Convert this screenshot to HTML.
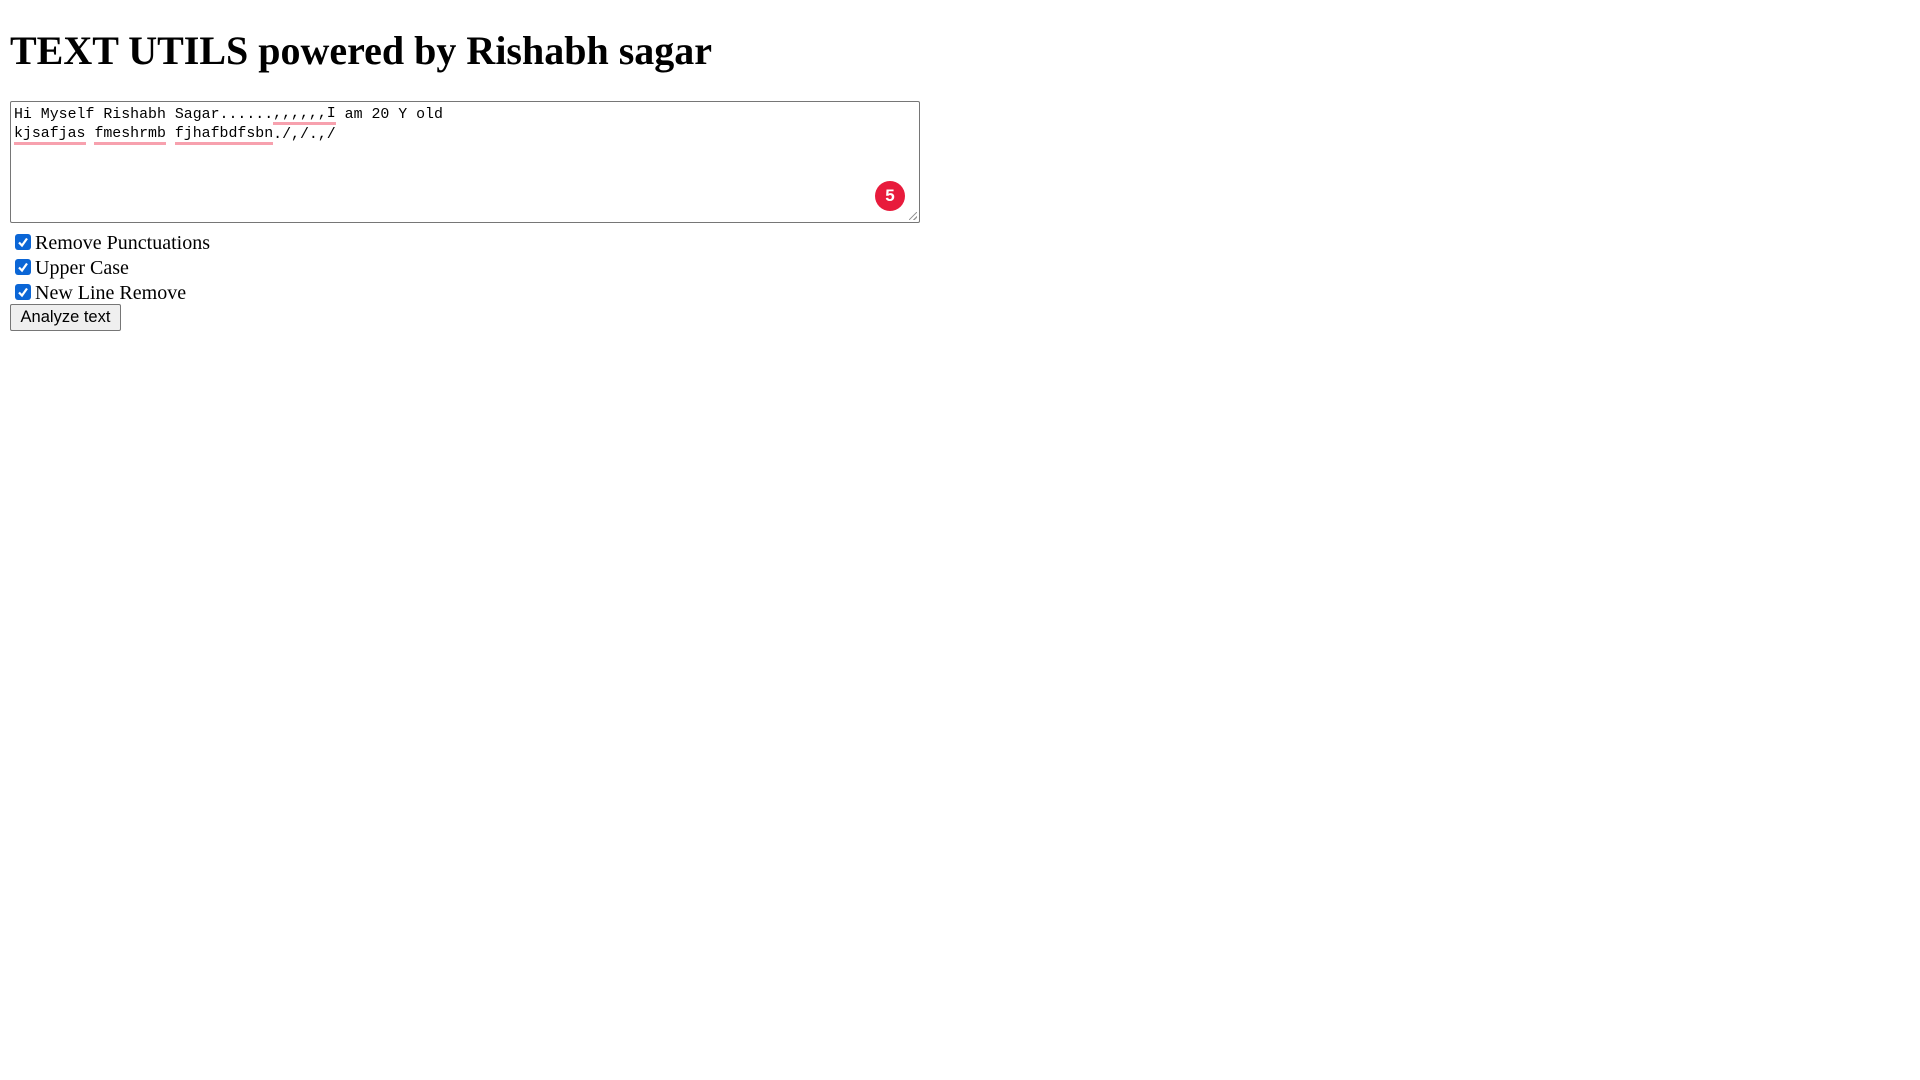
<!DOCTYPE html>
<html><head><style>
html,body{margin:0;background:#fff;width:1920px;height:1080px;overflow:hidden}
body{position:relative;font-family:"Liberation Serif",serif;color:#000}
h1{position:absolute;left:10px;top:28px;margin:0;font-size:40px;font-weight:bold;line-height:46px;white-space:nowrap}
.ta{position:absolute;left:10px;top:101px;border:1px solid #767676;border-radius:2px;font-family:"Liberation Mono",monospace;font-size:14.9px;line-height:20px;box-sizing:border-box;width:910px;height:122px}
.ta .l{position:absolute;left:3px;white-space:pre;height:20px}
.s{display:inline-block;height:20px;line-height:18px;box-sizing:border-box;border-bottom:3px solid #f7a1ae;vertical-align:top}
.badge{position:absolute;width:30px;height:30px;border-radius:50%;background:#e81b3c;color:#fff;font-family:"Liberation Sans",sans-serif;font-weight:bold;font-size:17px;line-height:30px;text-align:center}
.rz{position:absolute;right:2px;bottom:2px;width:8px;height:8px;background:linear-gradient(135deg,transparent 45%,#999 45%,#999 55%,transparent 55%,transparent 75%,#999 75%,#999 85%,transparent 85%)}
.cb{position:absolute;left:15px;width:16px;height:16px;background:#0b66d6;border-radius:3px}
.cb svg{position:absolute;left:2px;top:2px}
.lab{position:absolute;left:35px;font-size:20px;line-height:24px;white-space:nowrap}
.btn{position:absolute;left:10px;top:304px;width:111px;height:27px;box-sizing:border-box;border:1px solid #767676;border-radius:2px;background:#efefef;font-family:"Liberation Sans",sans-serif;font-size:16.5px;line-height:25px;text-align:center}
</style></head><body>
<h1>TEXT UTILS powered by Rishabh sagar</h1>
<div class="ta">
<div class="l" style="top:3px">Hi Myself Rishabh Sagar......<span class="s">,,,,,,I</span> am 20 Y old</div>
<div class="l" style="top:23px"><span class="s">kjsafjas</span> <span class="s">fmeshrmb</span> <span class="s">fjhafbdfsbn</span>./,/.,/</div>
<div class="badge" style="left:864px;top:79px">5</div>
<div class="rz"></div>
</div>
<div class="cb" style="top:234px"><svg width="12" height="12" viewBox="0 0 12 12"><path d="M2 6.5 L5 9.5 L10 2.5" stroke="#fff" stroke-width="2.2" fill="none"/></svg></div>
<div class="lab" style="top:231px">Remove Punctuations</div>
<div class="cb" style="top:259px"><svg width="12" height="12" viewBox="0 0 12 12"><path d="M2 6.5 L5 9.5 L10 2.5" stroke="#fff" stroke-width="2.2" fill="none"/></svg></div>
<div class="lab" style="top:256px">Upper Case</div>
<div class="cb" style="top:284px"><svg width="12" height="12" viewBox="0 0 12 12"><path d="M2 6.5 L5 9.5 L10 2.5" stroke="#fff" stroke-width="2.2" fill="none"/></svg></div>
<div class="lab" style="top:281px">New Line Remove</div>
<div class="btn">Analyze text</div>
</body></html>
